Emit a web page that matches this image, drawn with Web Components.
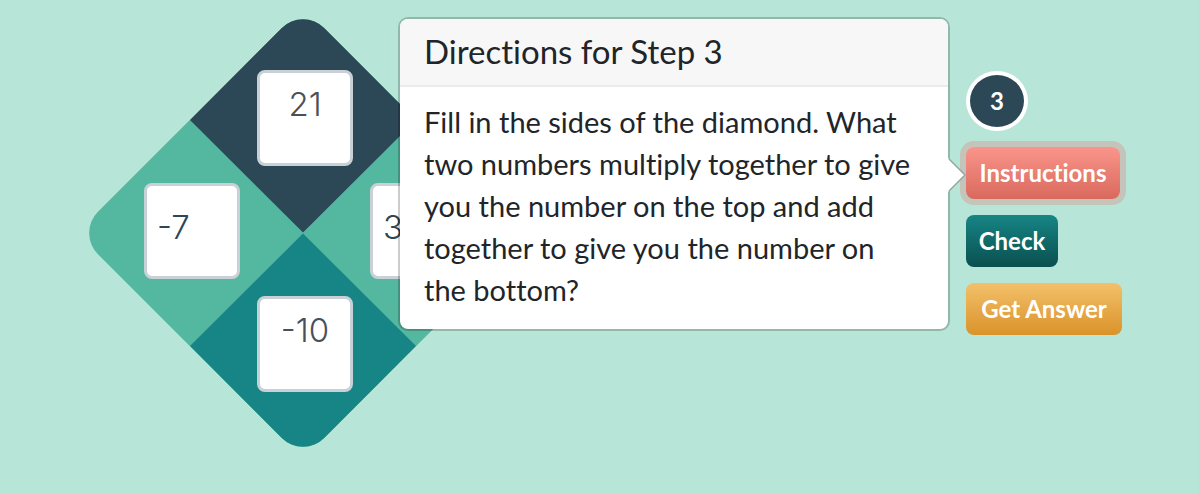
<!DOCTYPE html>
<html lang="en">
<head>
<meta charset="utf-8">
<title>Diamond Puzzle</title>
<style>
  body { margin: 0; min-height: 100vh; background: #b7e6d8; font-family: Lato, "Open Sans", sans-serif; font-variant-ligatures: none; color: #212529; }
</style>
</head>
<body>
<puzzle-page>
  <diamond-board slot="board">
    <number-box slot="top" label="Top product" value="21" given></number-box>
    <number-box slot="left" label="Left factor" value="-7"></number-box>
    <number-box slot="right" label="Right factor" value="3"></number-box>
    <number-box slot="bottom" label="Bottom sum" value="-10" given></number-box>
  </diamond-board>
  <step-badge slot="controls">3</step-badge>
  <popover-anchor slot="controls">
    <action-button tone="coral" active>Instructions</action-button>
    <step-popover slot="popover">
      <span slot="title">Directions for Step 3</span>
      Fill in the sides of the diamond. What two numbers multiply together to give you the number on the top and add together to give you the number on the bottom?
    </step-popover>
  </popover-anchor>
  <action-button slot="controls" tone="teal">Check</action-button>
  <action-button slot="controls" tone="amber">Get Answer</action-button>
</puzzle-page>
<script>
class BaseElement extends HTMLElement {
  constructor() {
    super();
    this.attachShadow({ mode: "open" }).innerHTML = this.constructor.markup;
  }
}

customElements.define("puzzle-page", class extends BaseElement {
  static markup = `
    <style>
      :host { display: block; }
      main { display: flex; justify-content: space-between; align-items: flex-start; padding: 7px 77px 32px; }
      .controls { display: flex; flex-direction: column; align-items: flex-start; gap: 16px; padding-top: 64px; width: 156px; }
    </style>
    <main>
      <slot name="board"></slot>
      <div class="controls"><slot name="controls"></slot></div>
    </main>`;
});

customElements.define("diamond-board", class extends BaseElement {
  static markup = `
    <style>
      :host { display: grid; }
      svg { grid-area: 1 / 1; width: 452px; height: 452px; display: block; }
      .cells { grid-area: 1 / 1; display: grid; grid-template: repeat(3, 96px) / repeat(3, 96px); gap: 17px; padding: 63px 0 0 67px; }
      .top { grid-area: 1 / 2; } .left { grid-area: 2 / 1; }
      .right { grid-area: 2 / 3; } .bottom { grid-area: 3 / 2; }
    </style>
    <svg viewBox="0 0 452 452" aria-hidden="true">
      <defs><clipPath id="r"><rect x="66" y="66" width="320" height="320" rx="30" transform="rotate(45 226 226)"/></clipPath></defs>
      <g clip-path="url(#r)">
        <rect width="452" height="452" fill="#54b7a0"/>
        <path d="M226-1 113 113 226 225.500 339 113Z" fill="#2c4755"/>
        <path d="M226 226.500 113 339 226 453 339 339Z" fill="#178585"/>
      </g>
    </svg>
    <div class="cells">
      <div class="top"><slot name="top"></slot></div>
      <div class="left"><slot name="left"></slot></div>
      <div class="right"><slot name="right"></slot></div>
      <div class="bottom"><slot name="bottom"></slot></div>
    </div>`;
});

customElements.define("number-box", class extends BaseElement {
  static markup = `
    <style>
      :host { display: block; }
      input { display: block; box-sizing: border-box; width: 96px; height: 96px; margin: 0; padding: 0 10px 8px; border: 3px solid #c9d1d7; border-radius: 8px; background: #fff; color: #2c4755; font: 300 33px/40px Inter, Lato, sans-serif; outline: 0; }
      :host([given]) input { color: #495057; text-align: center; padding-bottom: 28px; }
    </style>
    <input type="text">`;
  connectedCallback() {
    const input = this.shadowRoot.querySelector("input");
    input.value = this.getAttribute("value");
    input.setAttribute("aria-label", this.getAttribute("label"));
    input.readOnly = this.hasAttribute("given");
  }
});

customElements.define("step-badge", class extends BaseElement {
  static markup = `
    <style>
      :host { display: flex; align-items: center; justify-content: center; box-sizing: border-box; width: 62px; height: 60px; border: 4px solid #fff; border-radius: 50%; background: #2c4755; color: #fff; font-size: 24px; font-weight: 700; line-height: 36px; }
    </style>
    <slot></slot>`;
});

customElements.define("action-button", class extends BaseElement {
  static markup = `
    <style>
      :host { display: block; }
      button { display: block; height: 52px; margin: 0; padding: 0 12px; border: 0; border-radius: 8px; color: #fff; font: inherit; font-size: 24px; font-weight: 700; line-height: 36px; cursor: pointer; }
      :host([tone="coral"]) button { min-width: 154px; background: linear-gradient(#fa958b, #d9695d); }
      :host([tone="teal"]) button { min-width: 92px; background: linear-gradient(#178585, #0a4f4f); }
      :host([tone="amber"]) button { min-width: 156px; background: linear-gradient(#f3c06a, #da932a); }
      :host([active]) button { box-shadow: 0 0 0 6px #c4c4ba; }
    </style>
    <button type="button"><slot></slot></button>`;
});

customElements.define("popover-anchor", class extends BaseElement {
  static markup = `
    <style>
      :host { display: block; position: relative; }
      .pop { position: absolute; right: calc(100% + 16px); top: -130px; width: 552px; }
    </style>
    <slot></slot>
    <div class="pop"><slot name="popover"></slot></div>`;
});

customElements.define("step-popover", class extends BaseElement {
  static markup = `
    <style>
      :host { display: block; position: relative; box-sizing: border-box; border: 2px solid rgba(0,0,0,.2); border-radius: 10px; background: #fff; background-clip: padding-box; }
      h3 { margin: 0; padding: 13px 24px 15px; border-bottom: 2px solid #ebebeb; border-radius: 8px 8px 0 0; background: #f7f7f7; font-size: 33px; font-weight: 400; line-height: 38px; }
      p { margin: 0; padding: 14px 32px 18px 24px; font-size: 29px; line-height: 42px; }
      svg { position: absolute; left: 100%; top: 139px; width: 18px; height: 34px; display: block; }
    </style>
    <h3><slot name="title"></slot></h3>
    <p><slot></slot></p>
    <svg viewBox="0 0 18 34" aria-hidden="true"><path d="M0 0V34L17 17Z" fill="#fff"/><path d="M1 1 17 17 1 33" fill="none" stroke="#92a79f" stroke-width="1.500"/></svg>`;
});
</script>
</body>
</html>
